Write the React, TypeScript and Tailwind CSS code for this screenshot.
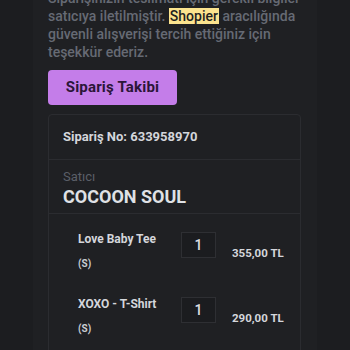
import React from "react";

export default function App() {
  const items = [
    { name: "Love Baby Tee", variant: "(S)", qty: "1", price: "355,00 TL" },
    { name: "XOXO - T-Shirt", variant: "(S)", qty: "1", price: "290,00 TL" },
  ];
  return (
    <div className="w-[350px] h-[350px] overflow-hidden bg-[#1c1d20] flex justify-center font-['Roboto',sans-serif]">
      <div className="w-[284px] bg-[#1f2023] pl-[15px] pr-[16px]">
        <p className="-mt-[11px] text-[14px] leading-[18px] font-medium text-[#666a74] whitespace-nowrap">
          Siparişinizin teslimatı için gerekli bilgiler
          <br />
          satıcıya iletilmiştir.{" "}
          <span className="bg-[#fbe38e] text-[#1f1f1f] px-[1px]">Shopier</span> aracılığında
          <br />
          güvenli alışverişi tercih ettiğiniz için
          <br />
          teşekkür ederiz.
        </p>
        <button className="mt-[9px] h-[35px] w-[129px] rounded-[4px] bg-[#c47de9] text-[#2b1538] text-[15px] font-bold tracking-[0.2px]">
          Sipariş Takibi
        </button>
        <div className="mt-[9px] border border-[#2b2c30] rounded-[4px]">
          <div className="h-[45px] flex items-center pl-[14px] text-[13px] font-bold text-[#d4d6db] border-b border-[#2b2c30]">
            Sipariş No: 633958970
          </div>
          <div className="h-[54px] pl-[14px] pt-[8px] border-b border-[#2b2c30]">
            <div className="text-[13px] leading-[18px] text-[#5b5f68]">Satıcı</div>
            <div className="text-[18px] leading-[22px] font-bold text-[#dfe1e5]">COCOON SOUL</div>
          </div>
          <div className="pl-[29px] pt-[16px] pb-[20px] flex flex-col gap-[24px]">
            {items.map((it) => (
              <div key={it.name} className="flex items-start">
                <div className="w-[103px]">
                  <div className="text-[12px] leading-[18px] font-bold text-[#d4d6db]">{it.name}</div>
                  <div className="mt-[9px] text-[10px] leading-[14px] font-bold text-[#c9ccd2]">{it.variant}</div>
                </div>
                <div className="mt-[2px] w-[35px] h-[26px] bg-[#1b1c1f] border border-[#2e2f33] flex items-center justify-center text-[14px] font-medium text-[#dcdee2]">
                  {it.qty}
                </div>
                <div className="ml-[16px] mt-[14px] text-[11.5px] leading-[18px] font-bold text-[#d4d6db]">
                  {it.price}
                </div>
              </div>
            ))}
          </div>
        </div>
      </div>
    </div>
  );
}
